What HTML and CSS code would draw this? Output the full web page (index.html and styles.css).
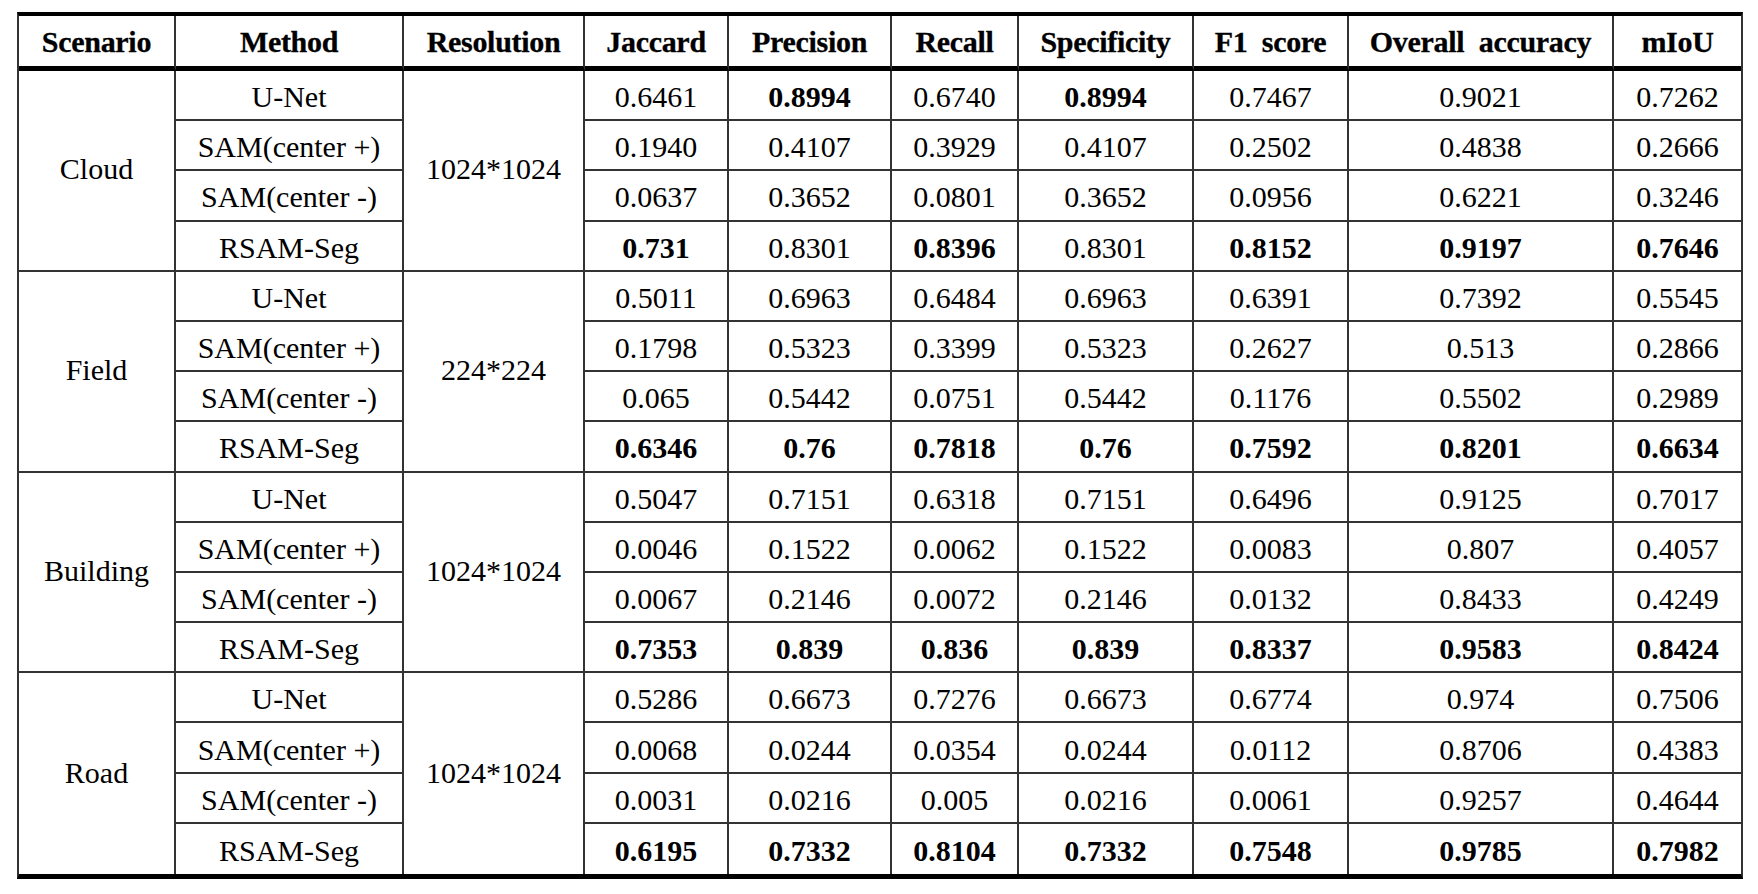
FILE: index.html
```html
<!DOCTYPE html>
<html lang="en">
<head>
<meta charset="utf-8">
<title>RSAM-Seg results</title>
<link rel="stylesheet" href="styles.css">
</head>
<body>
<table class="results">
  <colgroup>
    <col class="c-scn"><col class="c-met"><col class="c-res"><col class="c-jac"><col class="c-pre"><col class="c-rec"><col class="c-spe"><col class="c-f1"><col class="c-oa"><col class="c-miou">
  </colgroup>
  <thead>
    <tr>
      <th>Scenario</th><th>Method</th><th>Resolution</th><th>Jaccard</th><th>Precision</th><th>Recall</th><th>Specificity</th><th>F1&nbsp; score</th><th>Overall&nbsp; accuracy</th><th class="last">mIoU</th>
    </tr>
  </thead>
  <tbody>
    <tr>
      <td rowspan="4" class="grp">Cloud</td><td>U-Net</td><td rowspan="4" class="grp">1024*1024</td>
      <td>0.6461</td><td class="b">0.8994</td><td>0.6740</td><td class="b">0.8994</td><td>0.7467</td><td>0.9021</td><td class="last">0.7262</td>
    </tr>
    <tr><td>SAM(center +)</td><td>0.1940</td><td>0.4107</td><td>0.3929</td><td>0.4107</td><td>0.2502</td><td>0.4838</td><td class="last">0.2666</td></tr>
    <tr><td>SAM(center -)</td><td>0.0637</td><td>0.3652</td><td>0.0801</td><td>0.3652</td><td>0.0956</td><td>0.6221</td><td class="last">0.3246</td></tr>
    <tr><td>RSAM-Seg</td><td class="b">0.731</td><td>0.8301</td><td class="b">0.8396</td><td>0.8301</td><td class="b">0.8152</td><td class="b">0.9197</td><td class="b last">0.7646</td></tr>

    <tr>
      <td rowspan="4" class="grp">Field</td><td>U-Net</td><td rowspan="4" class="grp">224*224</td>
      <td>0.5011</td><td>0.6963</td><td>0.6484</td><td>0.6963</td><td>0.6391</td><td>0.7392</td><td class="last">0.5545</td>
    </tr>
    <tr><td>SAM(center +)</td><td>0.1798</td><td>0.5323</td><td>0.3399</td><td>0.5323</td><td>0.2627</td><td>0.513</td><td class="last">0.2866</td></tr>
    <tr><td>SAM(center -)</td><td>0.065</td><td>0.5442</td><td>0.0751</td><td>0.5442</td><td>0.1176</td><td>0.5502</td><td class="last">0.2989</td></tr>
    <tr><td>RSAM-Seg</td><td class="b">0.6346</td><td class="b">0.76</td><td class="b">0.7818</td><td class="b">0.76</td><td class="b">0.7592</td><td class="b">0.8201</td><td class="b last">0.6634</td></tr>

    <tr>
      <td rowspan="4" class="grp">Building</td><td>U-Net</td><td rowspan="4" class="grp">1024*1024</td>
      <td>0.5047</td><td>0.7151</td><td>0.6318</td><td>0.7151</td><td>0.6496</td><td>0.9125</td><td class="last">0.7017</td>
    </tr>
    <tr><td>SAM(center +)</td><td>0.0046</td><td>0.1522</td><td>0.0062</td><td>0.1522</td><td>0.0083</td><td>0.807</td><td class="last">0.4057</td></tr>
    <tr><td>SAM(center -)</td><td>0.0067</td><td>0.2146</td><td>0.0072</td><td>0.2146</td><td>0.0132</td><td>0.8433</td><td class="last">0.4249</td></tr>
    <tr><td>RSAM-Seg</td><td class="b">0.7353</td><td class="b">0.839</td><td class="b">0.836</td><td class="b">0.839</td><td class="b">0.8337</td><td class="b">0.9583</td><td class="b last">0.8424</td></tr>

    <tr>
      <td rowspan="4" class="grp end">Road</td><td>U-Net</td><td rowspan="4" class="grp end">1024*1024</td>
      <td>0.5286</td><td>0.6673</td><td>0.7276</td><td>0.6673</td><td>0.6774</td><td>0.974</td><td class="last">0.7506</td>
    </tr>
    <tr><td>SAM(center +)</td><td>0.0068</td><td>0.0244</td><td>0.0354</td><td>0.0244</td><td>0.0112</td><td>0.8706</td><td class="last">0.4383</td></tr>
    <tr><td>SAM(center -)</td><td>0.0031</td><td>0.0216</td><td>0.005</td><td>0.0216</td><td>0.0061</td><td>0.9257</td><td class="last">0.4644</td></tr>
    <tr class="final"><td>RSAM-Seg</td><td class="b">0.6195</td><td class="b">0.7332</td><td class="b">0.8104</td><td class="b">0.7332</td><td class="b">0.7548</td><td class="b">0.9785</td><td class="b last">0.7982</td></tr>
  </tbody>
</table>
</body>
</html>
```

FILE: styles.css
```css
html, body {
  margin: 0;
  padding: 0;
  background: #ffffff;
}

body {
  padding: 12px 0 0 17px;
  font-family: "Liberation Serif", "Times New Roman", serif;
  color: #000;
}

.results {
  border-collapse: separate;
  border-spacing: 0;
  table-layout: fixed;
  width: 1724px;
  border-top: 4px solid #000;
  border-bottom: 5px solid #000;
  border-left: 2px solid #333;
  border-right: 2px solid #333;
  font-size: 30px;
  line-height: 1;
}

.c-scn { width: 157px; }
.c-met { width: 228px; }
.c-res { width: 181px; }
.c-jac { width: 144px; }
.c-pre { width: 163px; }
.c-rec { width: 127px; }
.c-spe { width: 175px; }
.c-f1 { width: 155px; }
.c-oa { width: 265px; }
.c-miou { width: 127px; }

.results th,
.results td {
  box-sizing: border-box;
  padding: 0;
  text-align: center;
  vertical-align: middle;
  white-space: nowrap;
  border-right: 2px solid #333;
  border-bottom: 2px solid #333;
}

.results th {
  height: 55px;
  padding-top: 2px;
  font-weight: bold;
  border-bottom: 5px solid #000;
  letter-spacing: -0.3px;
  -webkit-text-stroke: 0.3px #000;
}

.results td {
  height: 50.2px;
  padding-top: 4px;
}

.results td.grp {
  padding-top: 0;
  padding-bottom: 2px;
}

.results .last {
  border-right: none;
}

.results td.b {
  font-weight: bold;
}

.results .final td,
.results td.end {
  border-bottom: none;
}
```
